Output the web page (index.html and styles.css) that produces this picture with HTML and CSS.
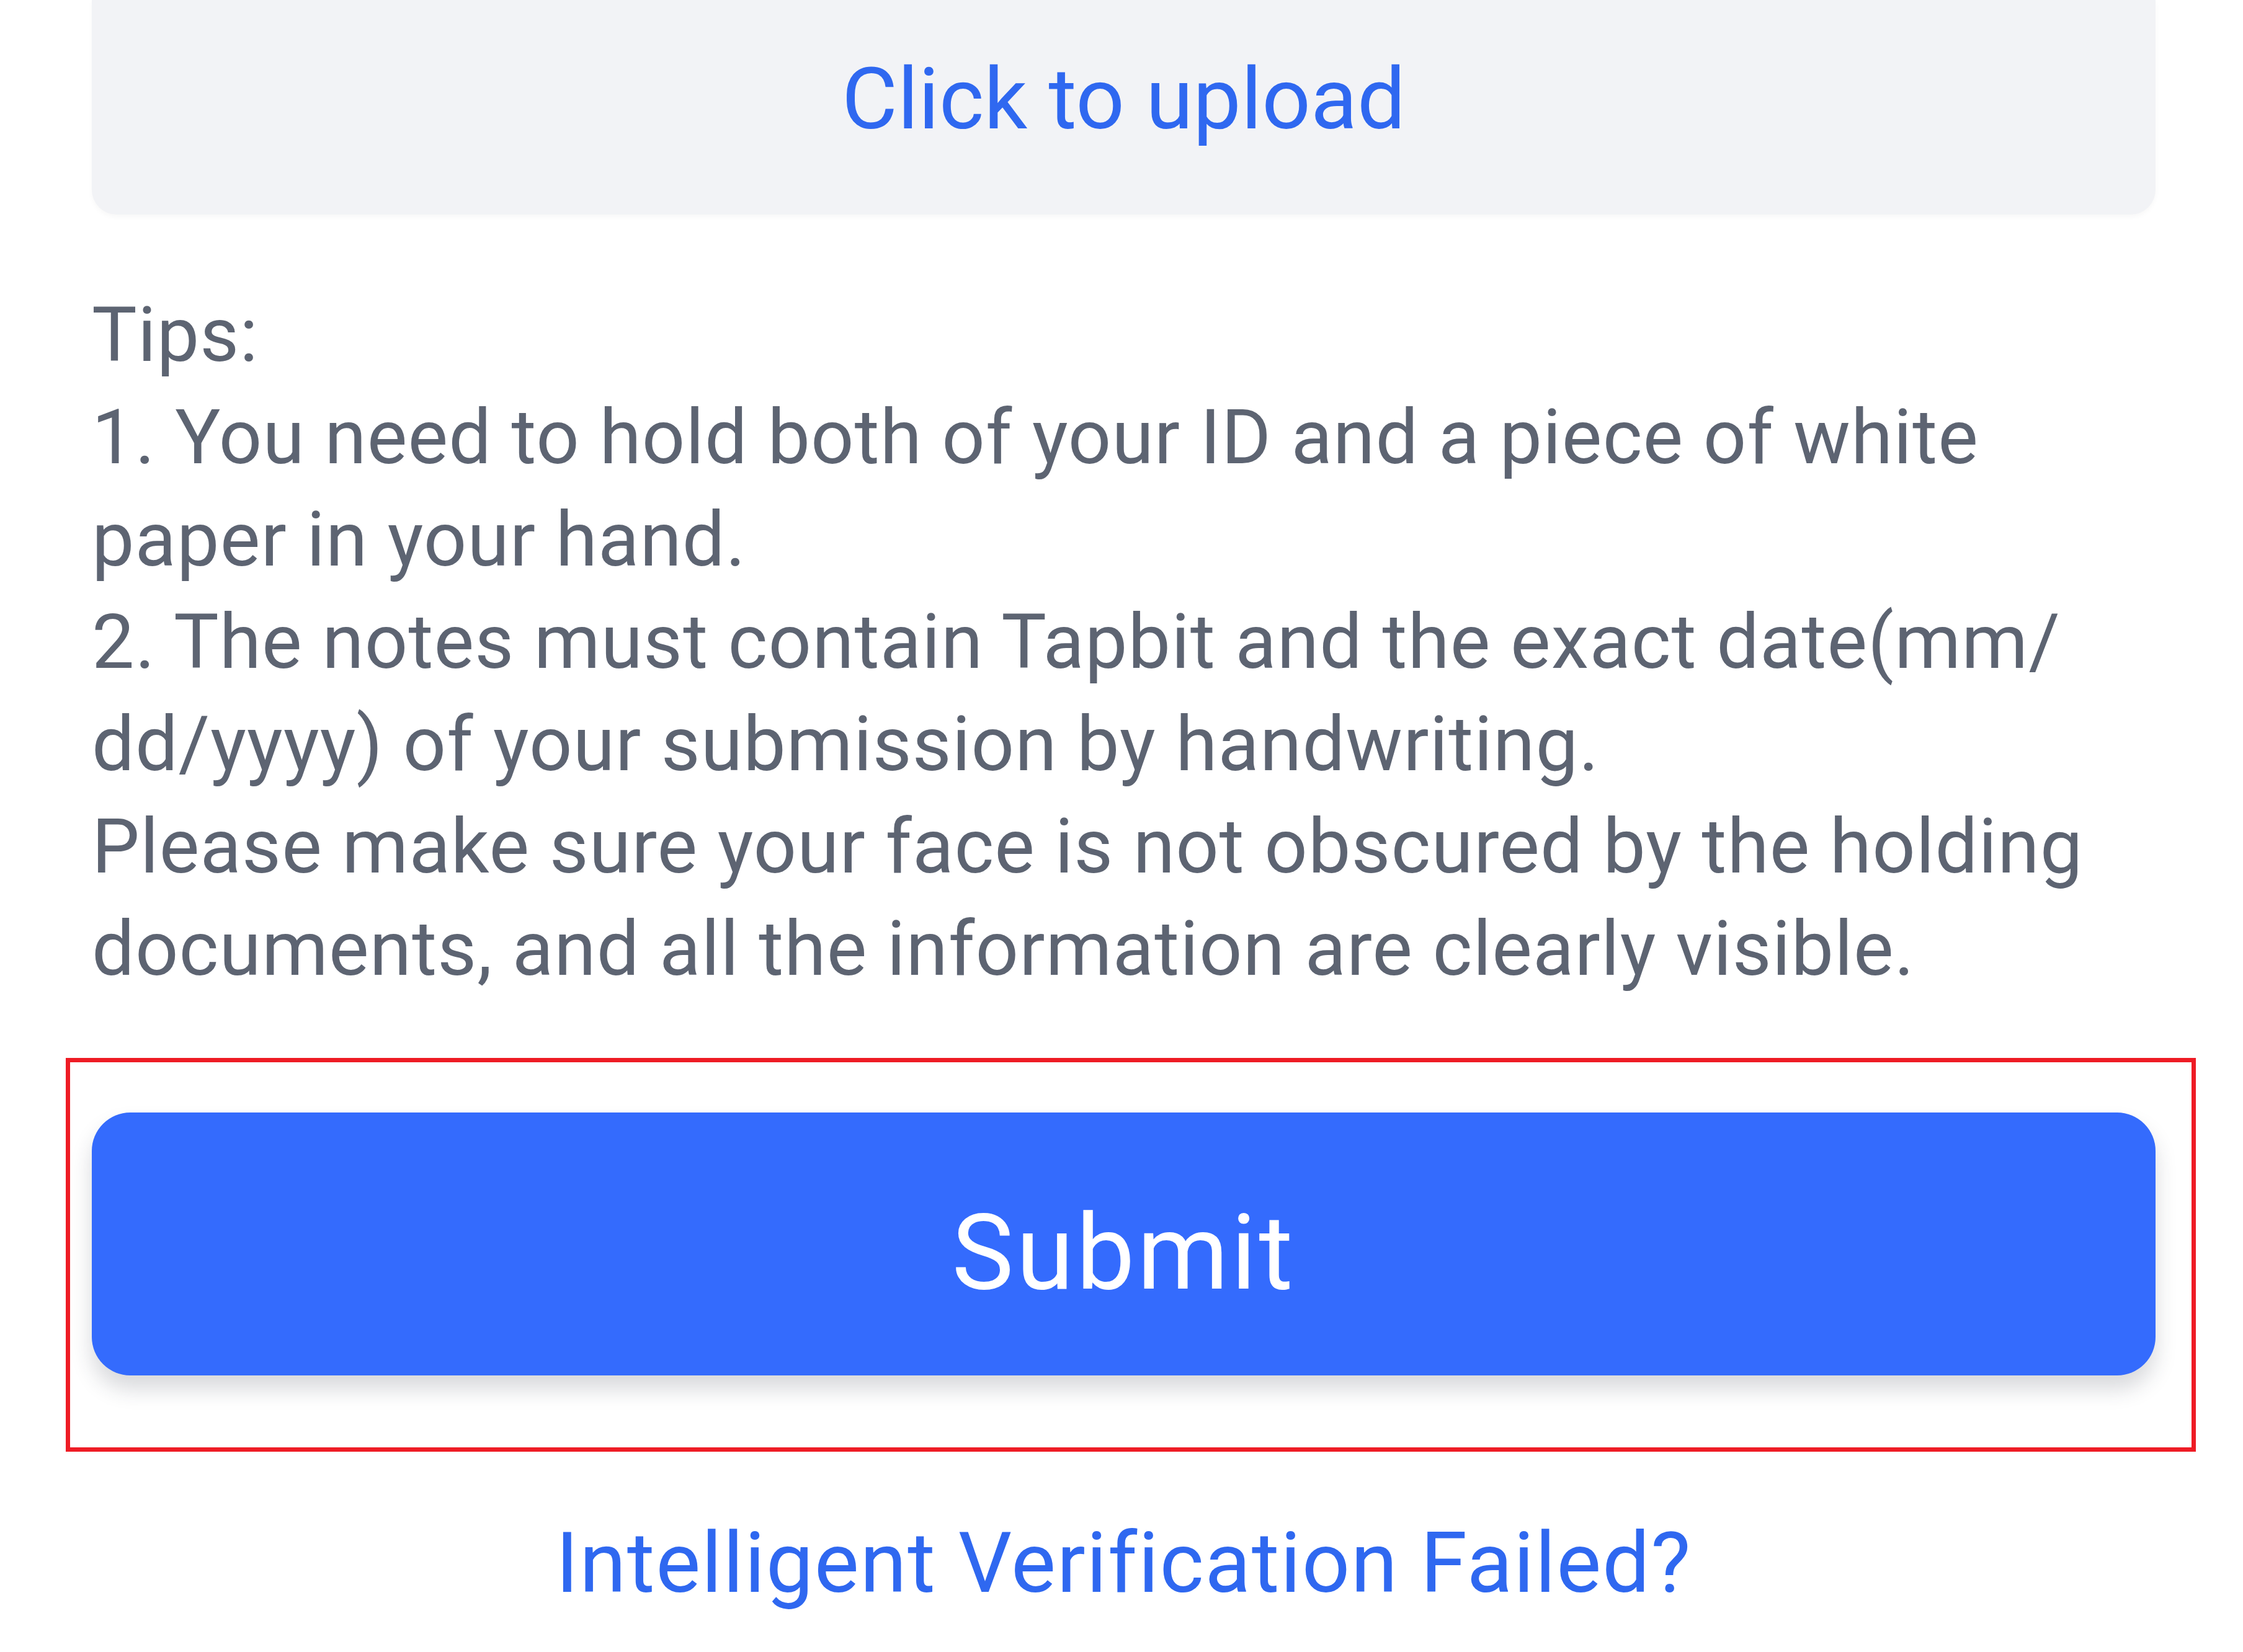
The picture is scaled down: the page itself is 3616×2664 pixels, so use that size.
FILE: index.html
```html
<!DOCTYPE html>
<html lang="en">
<head>
<meta charset="utf-8">
<title>Upload</title>
<link rel="stylesheet" href="styles.css">
</head>
<body>
<main class="page">
  <div class="upload-box">
    <span class="upload-link">Click to upload</span>
  </div>
  <p class="tips">Tips:<br>1. You need to hold both of your ID and a piece of white<br>paper in your hand.<br>2. The notes must contain Tapbit and the exact date(mm/<br>dd/yyyy) of your submission by handwriting.<br>Please make sure your face is not obscured by the holding<br>documents, and all the information are clearly visible.</p>
  <div class="submit-wrap">
    <button class="submit-btn" type="button">Submit</button>
    <div class="annot"></div>
  </div>
  <div class="failed-row"><span class="failed-link">Intelligent Verification Failed?</span></div>
</main>
</body>
</html>
```

FILE: styles.css
```css
html, body {
  margin: 0;
  padding: 0;
  background: #ffffff;
}
body {
  font-family: Roboto, "Noto Sans", "Liberation Sans", sans-serif;
  overflow: hidden;
}
.page {
  padding: 0 141px 0 148px;
}
.upload-box {
  height: 346px;
  box-sizing: border-box;
  background: #f2f3f6;
  border-radius: 0 0 40px 40px;
  box-shadow: 0 4px 8px rgba(0, 0, 0, 0.03);
  padding-top: 77px;
  text-align: center;
}
.upload-link {
  font-size: 138px;
  line-height: 166px;
  color: #2f68f0;
}
.tips {
  margin: 112px 0 0 0;
  font-size: 122px;
  line-height: 165px;
  letter-spacing: 1.1px;
  color: #5d6472;
  white-space: nowrap;
}
.submit-wrap {
  position: relative;
  margin-top: 181px;
}
.submit-btn {
  display: block;
  width: 100%;
  height: 424px;
  padding: 28px 0 0 0;
  border: 0;
  border-radius: 62px;
  background: #346bfd;
  color: #ffffff;
  font-family: inherit;
  font-size: 168px;
  letter-spacing: 4px;
  box-shadow: 0 22px 34px rgba(40, 45, 60, 0.18);
  cursor: pointer;
}
.annot {
  position: absolute;
  left: -42px;
  top: -88px;
  right: -65px;
  bottom: -123px;
  border: 7px solid #ee1c25;
  pointer-events: none;
}
.failed-row {
  margin-top: 221px;
  text-align: center;
}
.failed-link {
  font-size: 136px;
  line-height: 163px;
  letter-spacing: 1.6px;
  color: #2f68f0;
}
```
